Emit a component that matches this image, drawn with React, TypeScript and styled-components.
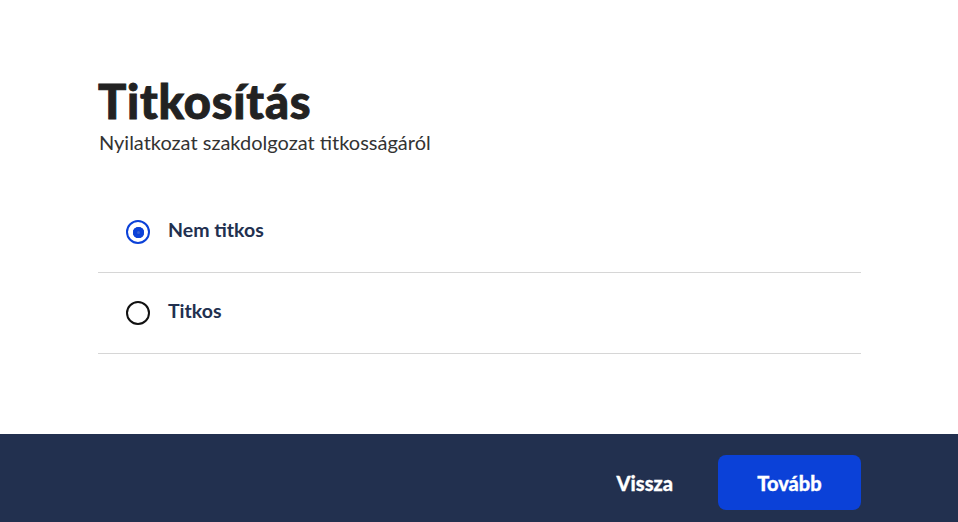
import React, { useState } from "react";
import styled, { createGlobalStyle } from "styled-components";

const GlobalStyle = createGlobalStyle`
  html, body {
    margin: 0;
    padding: 0;
    background: #ffffff;
    font-family: Lato, "Open Sans", sans-serif;
  }
  * {
    box-sizing: border-box;
  }
`;

const options = [
  { id: "public", label: "Nem titkos" },
  { id: "secret", label: "Titkos" },
];

const App: React.FC = () => {
  const [selected, setSelected] = useState("public");
  return (
    <Page>
      <GlobalStyle />
      <Main>
        <Title>Titkosítás</Title>
        <Subtitle>Nyilatkozat szakdolgozat titkosságáról</Subtitle>
        <OptionList>
          {options.map((o) => (
            <OptionRow key={o.id} onClick={() => setSelected(o.id)}>
              <Radio checked={selected === o.id} />
              <OptionLabel>{o.label}</OptionLabel>
            </OptionRow>
          ))}
        </OptionList>
      </Main>
      <Footer>
        <BackButton>Vissza</BackButton>
        <NextButton>Tovább</NextButton>
      </Footer>
    </Page>
  );
};

export default App;

const Page = styled.div`
  min-height: 100vh;
  display: flex;
  flex-direction: column;
`;

const Main = styled.main`
  flex: 1;
  width: 763px;
  margin-left: 98px;
  padding-top: 78px;
`;

const Title = styled.h1`
  margin: 0;
  font-size: 47px;
  line-height: 46px;
  font-weight: 900;
  color: #222222;
  letter-spacing: 0.8px;
  -webkit-text-stroke: 0.9px #222222;
`;

const Subtitle = styled.p`
  margin: 7px 0 0 1px;
  font-size: 20px;
  line-height: 22px;
  color: #333333;
`;

const OptionList = styled.div`
  margin-top: 39px;
  display: flex;
  flex-direction: column;
`;

const OptionRow = styled.label`
  display: flex;
  align-items: center;
  height: 81px;
  padding-left: 28px;
  border-bottom: 1px solid #d6d6d6;
  cursor: pointer;
`;

const Radio = styled.span<{ checked?: boolean }>`
  position: relative;
  width: 24px;
  height: 24px;
  border-radius: 50%;
  border: 2px solid ${({ checked }) => (checked ? "#0b41d8" : "#111111")};
  flex-shrink: 0;
  ${({ checked }) =>
    checked
      ? `
    &::after {
      content: "";
      position: absolute;
      left: 4.5px;
      top: 4.5px;
      width: 11px;
      height: 11px;
      border-radius: 50%;
      background: #0b41d8;
      box-shadow: inset 0 0 0 4px #0b41d8, inset 0 0 0 6px #3a5fd0;
    }
  `
      : ""}
`;

const OptionLabel = styled.span`
  margin-left: 18px;
  font-size: 19.5px;
  font-weight: 700;
  color: #22304f;
  margin-top: -6px;
`;

const Footer = styled.footer`
  height: 88px;
  background: #22304f;
  display: flex;
  align-items: flex-start;
  justify-content: flex-end;
  padding-top: 21px;
  padding-right: 97px;
  gap: 45px;
`;

const BackButton = styled.button`
  height: 55px;
  background: none;
  border: none;
  padding: 0;
  font-family: Lato, sans-serif;
  font-size: 20px;
  font-weight: 900;
  color: #ffffff;
  -webkit-text-stroke: 0.3px #ffffff;
  cursor: pointer;
`;

const NextButton = styled.button`
  width: 143px;
  height: 55px;
  border: none;
  border-radius: 8px;
  background: #0b41d8;
  font-family: Lato, sans-serif;
  font-size: 20px;
  font-weight: 900;
  color: #ffffff;
  -webkit-text-stroke: 0.3px #ffffff;
  cursor: pointer;
`;
